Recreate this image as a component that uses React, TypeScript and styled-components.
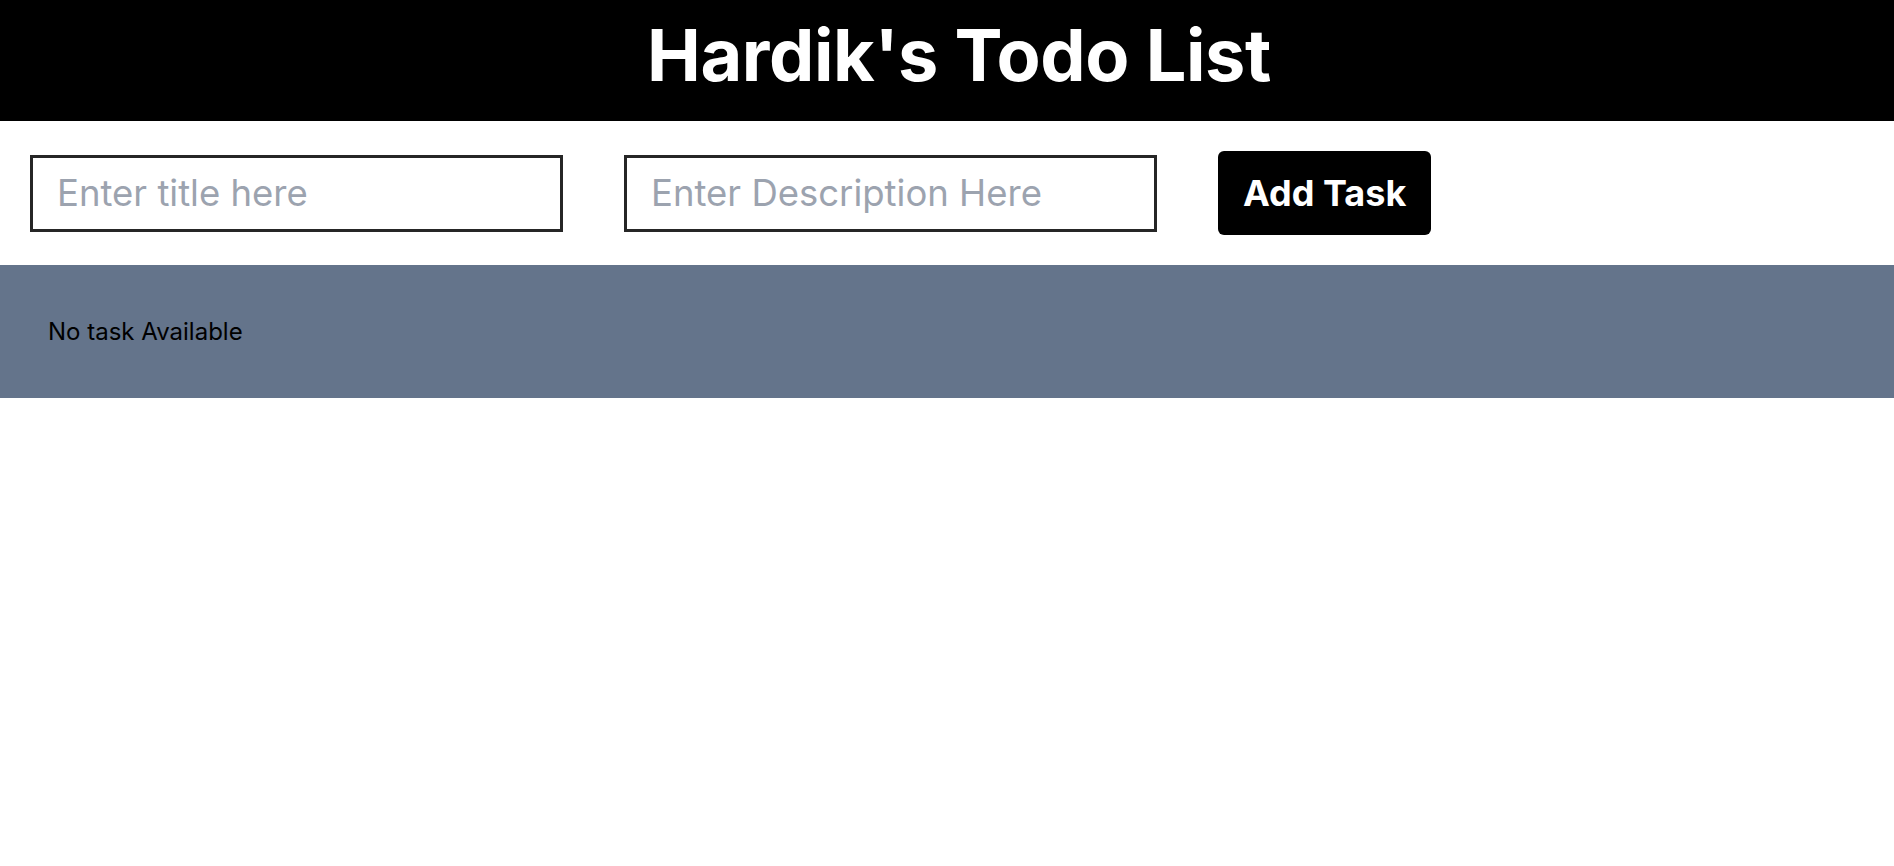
import React, { useState } from "react";
import styled, { createGlobalStyle } from "styled-components";

const GlobalStyle = createGlobalStyle`
  * { box-sizing: border-box; }
  html, body { margin: 0; padding: 0; background: #ffffff; }
  body { font-family: Inter, "Noto Sans", sans-serif; }
`;

const Page = styled.div`
  display: flex;
  flex-direction: column;
  width: 100%;
`;

const Header = styled.header`
  background: #000000;
  padding: 19px 0 30px 24px;
  display: flex;
  justify-content: center;
`;

const Title = styled.h1`
  margin: 0;
  color: #ffffff;
  font-family: Inter, sans-serif;
  font-weight: 700;
  font-size: 72px;
  line-height: 72px;
  letter-spacing: -0.4px;
`;

const FormRow = styled.form`
  display: flex;
  align-items: center;
  gap: 61px;
  padding: 30px;
  margin: 0;
`;

const TextInput = styled.input`
  width: 533px;
  height: 77px;
  border: 3px solid #262626;
  border-radius: 0;
  padding: 0 24px;
  font-family: Inter, sans-serif;
  font-size: 36.5px;
  color: #111827;
  background: #ffffff;
  outline: none;
  &::placeholder {
    color: #9ca3af;
  }
`;

const AddButton = styled.button`
  height: 84px;
  padding: 0 25px;
  border: none;
  border-radius: 6px;
  background: #000000;
  color: #ffffff;
  font-family: Inter, sans-serif;
  font-weight: 700;
  font-size: 36px;
  cursor: pointer;
`;

const TaskArea = styled.section`
  background: #64748b;
  padding: 52px 48px;
`;

const EmptyText = styled.p`
  margin: 0;
  font-family: Inter, sans-serif;
  font-size: 24px;
  line-height: 29px;
  color: #000000;
`;

export default function App() {
  const [title, setTitle] = useState("");
  const [desc, setDesc] = useState("");
  return (
    <>
      <GlobalStyle />
      <Page>
        <Header>
          <Title>Hardik's Todo List</Title>
        </Header>
        <FormRow onSubmit={(e) => e.preventDefault()}>
          <TextInput
            placeholder="Enter title here"
            value={title}
            onChange={(e) => setTitle(e.target.value)}
          />
          <TextInput
            placeholder="Enter Description Here"
            value={desc}
            onChange={(e) => setDesc(e.target.value)}
          />
          <AddButton type="submit">Add Task</AddButton>
        </FormRow>
        <TaskArea>
          <EmptyText>No task Available</EmptyText>
        </TaskArea>
      </Page>
    </>
  );
}
